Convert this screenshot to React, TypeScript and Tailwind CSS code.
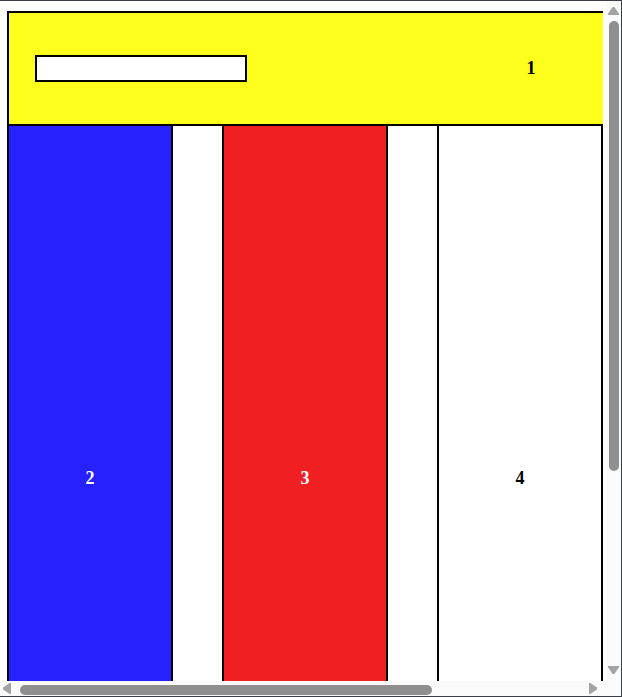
const columns = [
  { label: "2", box: "bg-[#2720ff] text-white" },
  { label: "3", box: "bg-[#ef1f22] text-white" },
  { label: "4", box: "bg-white text-black" },
];

const Arrow = ({ dir }: { dir: "up" | "down" | "left" | "right" }) => {
  const points = {
    up: "5.5,0 11,8 0,8",
    down: "0,0 11,0 5.5,8",
    left: "8,0 8,11 0,5.5",
    right: "0,0 8,5.5 0,11",
  }[dir];
  const vertical = dir === "up" || dir === "down";
  return (
    <svg
      width={vertical ? 11 : 8}
      height={vertical ? 8 : 11}
      viewBox={vertical ? "0 0 11 8" : "0 0 8 11"}
      className="shrink-0"
    >
      <polygon points={points} fill="#a3a3a3" stroke="#a3a3a3" strokeLinejoin="round" strokeWidth="1.5" />
    </svg>
  );
};

const App = () => {
  return (
    <div className="w-[622px] h-[697px] flex flex-col bg-white border-t border-r border-b border-[#3a3e46] font-['Liberation_Serif',serif]">
      <div className="flex h-[680px]">
        {/* Viewport */}
        <div className="w-[606px] overflow-hidden">
          <div className="pl-[7px] pt-[10px]">
            <div className="w-[596px]">
              {/* Header */}
              <div className="h-[115px] flex items-center bg-[#ffff1e] border-t-2 border-l-2 border-b-2 border-black">
                <input
                  type="text"
                  className="ml-[26px] w-[212px] h-[27px] bg-white border-2 border-black outline-none"
                />
                <span className="ml-auto w-[144px] text-center text-[18px] font-bold text-black">
                  1
                </span>
              </div>

              {/* Columns */}
              <div className="flex justify-between">
                {columns.map((col) => (
                  <div
                    key={col.label}
                    className={`w-[166px] h-[706px] flex items-center justify-center text-[18px] font-bold border-l-2 border-r-2 border-b-2 border-black ${col.box}`}
                  >
                    {col.label}
                  </div>
                ))}
              </div>
            </div>
          </div>
        </div>

        {/* Vertical scrollbar */}
        <div className="w-[15px] bg-[#fafafa] flex flex-col items-center pt-[6px] pb-[7px]">
          <Arrow dir="up" />
          <div className="mt-[6px] w-[10px] h-[450px] rounded-full bg-[#8f8f8f]" />
          <div className="flex-1" />
          <Arrow dir="down" />
        </div>
      </div>

      {/* Horizontal scrollbar */}
      <div className="flex h-[15px]">
        <div className="w-[606px] bg-[#fafafa] flex items-center">
          <div className="ml-[3px]">
            <Arrow dir="left" />
          </div>
          <div className="ml-[9px] w-[412px] h-[10px] mt-[3px] rounded-full bg-[#8f8f8f]" />
          <div className="flex-1" />
          <div className="mr-[9px]">
            <Arrow dir="right" />
          </div>
        </div>
        <div className="w-[15px] bg-[#fafafa]" />
      </div>
    </div>
  );
};

export default App;
